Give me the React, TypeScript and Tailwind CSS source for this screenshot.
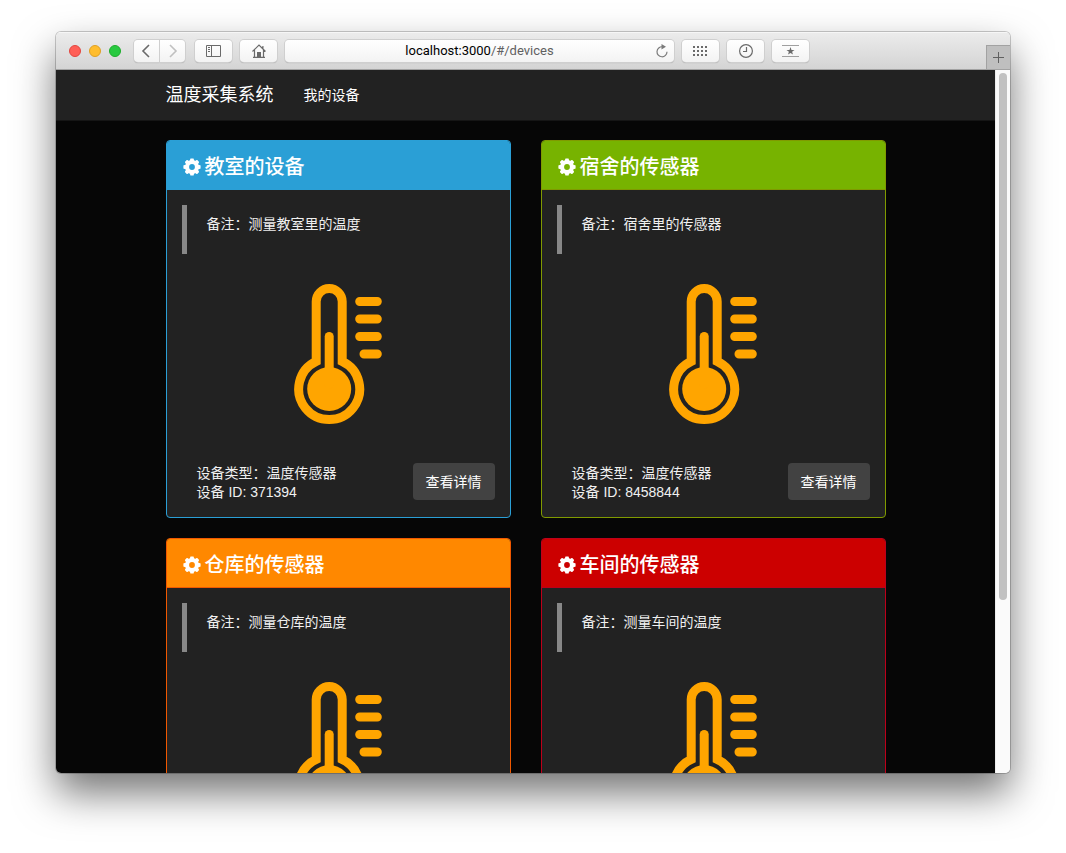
import type { ReactNode } from "react";

interface Device {
  id?: number;
  name: string;
  note: string;
  type?: string;
  border: string;
  heading: string;
}

const devices: Device[] = [
  {
    id: 371394,
    name: "教室的设备",
    note: "测量教室里的温度",
    type: "温度传感器",
    border: "border-[#2a9fd6]",
    heading: "bg-[#2a9fd6] border-[#2a9fd6]",
  },
  {
    id: 8458844,
    name: "宿舍的传感器",
    note: "宿舍里的传感器",
    type: "温度传感器",
    border: "border-[#809a00]",
    heading: "bg-[#77b300] border-[#809a00]",
  },
  {
    name: "仓库的传感器",
    note: "测量仓库的温度",
    border: "border-[#f05800]",
    heading: "bg-[#ff8800] border-[#f05800]",
  },
  {
    name: "车间的传感器",
    note: "测量车间的温度",
    border: "border-[#bd001a]",
    heading: "bg-[#cc0000] border-[#bd001a]",
  },
];

const gearTeeth = [0, 45, 90, 135, 180, 225, 270, 315];

function GearIcon() {
  return (
    <svg viewBox="0 0 18 18" className="w-[18px] h-[18px] shrink-0" fill="currentColor" aria-hidden="true">
      {gearTeeth.map((deg) => (
        <path key={deg} d="M6.6 4 7.3 .8Q7.4 .4 7.8 .4H10.2Q10.6 .4 10.7 .8L11.4 4Z" transform={`rotate(${deg} 9 9)`} />
      ))}
      <circle cx="9" cy="9" r="4.9" fill="none" stroke="currentColor" strokeWidth="4" />
    </svg>
  );
}

function Thermometer() {
  return (
    <svg viewBox="0 0 88 140" className="w-[88px] h-[140px]" fill="none" aria-hidden="true">
      <path
        d="M22.2 77.4V17.5a13 13 0 0 1 26 0V77.4A30.5 30.5 0 1 1 22.2 77.4Z"
        stroke="#ffa500"
        strokeWidth="9"
      />
      <circle cx="35.2" cy="105" r="22" fill="#ffa500" />
      <path d="M35.2 52.5V100" stroke="#ffa500" strokeWidth="9" strokeLinecap="round" />
      <path
        d="M65.7 17.5H83.3M65.7 35H83.3M65.7 52.5H83.3M70 70H83.3"
        stroke="#ffa500"
        strokeWidth="9"
        strokeLinecap="round"
      />
    </svg>
  );
}

function ToolbarButton({ label, className = "w-[37px] rounded-sm", children }: { label: string; className?: string; children: ReactNode }) {
  return (
    <button
      type="button"
      aria-label={label}
      className={`h-[22px] flex items-center justify-center bg-linear-to-b from-white to-[#f3f3f3] text-[#6a6a6a] shadow-[0_0_0_1px_#cfcfcf,0_1px_1px_#9a9a9a] ${className}`}
    >
      {children}
    </button>
  );
}

function BrowserToolbar() {
  return (
    <div className="h-[38px] shrink-0 flex items-center pl-[13px] bg-linear-to-b from-[#ececec] to-[#d4d4d4] border-b border-[#a2a2a2] shadow-[inset_0_1px_0_#f6f6f6]">
      <div className="flex gap-2 mr-[13px]">
        <span className="w-3 h-3 rounded-full bg-[#ff5f57] border border-[#e2463f]" />
        <span className="w-3 h-3 rounded-full bg-[#ffbd2e] border border-[#dfa023]" />
        <span className="w-3 h-3 rounded-full bg-[#28c940] border border-[#1dad2b]" />
      </div>
      <div className="flex flex-1 items-center gap-2">
        <div className="flex gap-px mr-[2px]">
          <ToolbarButton label="后退" className="w-[25px] rounded-l-sm">
            <svg viewBox="0 0 10 14" className="w-[10px] h-[14px] mr-[2px]" fill="none" stroke="currentColor" strokeWidth="1.6">
              <path d="M8 1 2 7l6 6" />
            </svg>
          </ToolbarButton>
          <ToolbarButton label="前进" className="w-[25px] rounded-r-sm">
            <svg viewBox="0 0 10 14" className="w-[10px] h-[14px]" fill="none" stroke="#c0c0c0" strokeWidth="1.6">
              <path d="m2 1 6 6-6 6" />
            </svg>
          </ToolbarButton>
        </div>
        <ToolbarButton label="边栏">
          <svg viewBox="0 0 15 12" className="w-[15px] h-3" fill="none" stroke="currentColor">
            <path d="M.5 .5h14v11H.5zM5.5 .5v11M2 2.5h2M2 4.5h2M2 6.5h2" />
          </svg>
        </ToolbarButton>
        <ToolbarButton label="主页">
          <svg viewBox="0 0 14 14" className="w-[14px] h-[14px]" fill="none" stroke="currentColor" strokeWidth="1.2">
            <path d="M.5 7.5 7 1l6.5 6.5M2.5 6v7.5M11.5 6v7.5M1 13.4h12M10.9 4.5V2" />
            <path d="M5 8h4v5.5H5z" fill="currentColor" stroke="none" />
          </svg>
        </ToolbarButton>
        <div className="flex flex-1 h-[22px] items-center rounded-sm bg-linear-to-b from-white to-[#f3f3f3] shadow-[0_0_0_1px_#cfcfcf,0_1px_1px_#9a9a9a] pl-[18px] pr-[6px]">
          <a href="#/devices" className="flex-1 text-center text-[13px] leading-5 font-['Roboto',sans-serif] text-black">
            localhost:3000<span className="text-[#606060]">/#/devices</span>
          </a>
          <button type="button" aria-label="刷新" className="text-[#7a7a7a]">
            <svg viewBox="0 0 12 14" className="w-3 h-[14px]" fill="none" stroke="currentColor" strokeWidth="1.2">
              <path d="M6.5 2.8A5 5 0 1 0 11 7.8" />
              <path d="M5.5 0 10 2.8 5.5 5.6Z" fill="currentColor" stroke="none" />
            </svg>
          </button>
        </div>
        <ToolbarButton label="常用网站">
          <svg viewBox="0 0 15 10" className="w-[15px] h-[10px]" fill="none" stroke="currentColor" strokeWidth="2" strokeDasharray="2 2">
            <path d="M0 1h15M0 5h15M0 9h15" />
          </svg>
        </ToolbarButton>
        <ToolbarButton label="历史记录">
          <svg viewBox="0 0 14 14" className="w-[14px] h-[14px]" fill="none" stroke="currentColor" strokeWidth="1.2">
            <circle cx="7" cy="7" r="6.4" />
            <path d="M7.5 3v4.5H4" />
          </svg>
        </ToolbarButton>
        <ToolbarButton label="书签">
          <svg viewBox="0 0 17 12" className="w-[17px] h-3" fill="none">
            <path d="M0 .5h17M0 11.5h17" stroke="#a0a0a0" />
            <path d="m8.5 2 1 2.9h3l-2.4 1.8.9 2.9-2.5-1.7L6 9.6l.9-2.9-2.4-1.8h3z" fill="currentColor" />
          </svg>
        </ToolbarButton>
      </div>
      <div className="w-[177px]" />
      <button
        type="button"
        aria-label="新建标签页"
        className="w-6 h-6 self-end flex items-center justify-center bg-[#bfbfbf] border-t border-l border-[#a2a2a2] text-[#606060]"
      >
        <svg viewBox="0 0 11 11" className="w-[11px] h-[11px]" stroke="currentColor">
          <path d="M5.5 0v11M0 5.5h11" />
        </svg>
      </button>
    </div>
  );
}

function DeviceCard({ device }: { device: Device }) {
  return (
    <section className={`border rounded-sm bg-[#222222] ${device.border}`}>
      <div className={`border-b rounded-t-[3px] px-4 pt-[14px] pb-[10px] ${device.heading}`}>
        <h3 className="flex items-center gap-1 text-xl leading-6 font-medium text-white">
          <GearIcon />
          {device.name}
        </h3>
      </div>
      <div className="p-[15px]">
        <blockquote className="border-l-[5px] border-[#888888] pl-5 pt-[10px] pb-5 leading-[19px]">
          备注：{device.note}
        </blockquote>
        <div className="flex justify-center py-[30px] pr-px">
          <Thermometer />
        </div>
        {device.id !== undefined && (
          <div className="flex items-start justify-between pt-[9px]">
            <p className="pl-[15px] pt-px leading-[19px]">
              设备类型：{device.type}
              <br />
              设备 ID: {device.id}
            </p>
            <button type="button" className="h-[37px] px-[13px] rounded-sm bg-[#424242] text-white">
              查看详情
            </button>
          </div>
        )}
      </div>
    </section>
  );
}

export default function App() {
  return (
    <div className="h-screen bg-white px-14 pt-8 pb-20 font-['Liberation_Sans','Noto_Sans_CJK_SC',sans-serif] text-sm text-[#f0f0f0]">
      <div className="h-full flex flex-col overflow-hidden rounded-[5px] shadow-[0_0_0_1px_rgba(0,0,0,0.2),0_20px_40px_rgba(0,0,0,0.55)]">
        <BrowserToolbar />
        <div className="flex flex-1 min-h-0">
          <div className="flex-1 overflow-hidden bg-[#060606]">
            <nav className="bg-[#222222] border-b border-[#151515]">
              <div className="mx-auto max-w-[750px] px-[15px] h-[50px] flex items-center gap-[30px]">
                <a href="#/" className="text-lg text-white">温度采集系统</a>
                <a href="#/devices" className="text-white">我的设备</a>
              </div>
            </nav>
            <main className="mx-auto max-w-[750px] px-[15px] pt-[19px] pb-5 grid grid-cols-2 gap-x-[30px] gap-y-5">
              {devices.map((device) => (
                <DeviceCard key={device.name} device={device} />
              ))}
            </main>
          </div>
          <div className="w-[15px] shrink-0 bg-[#fafafa] border-l border-[#ececec] pl-[3px]">
            <div className="mt-[3px] w-2 h-3/4 rounded-full bg-[#c1c1c1]" />
          </div>
        </div>
      </div>
    </div>
  );
}
